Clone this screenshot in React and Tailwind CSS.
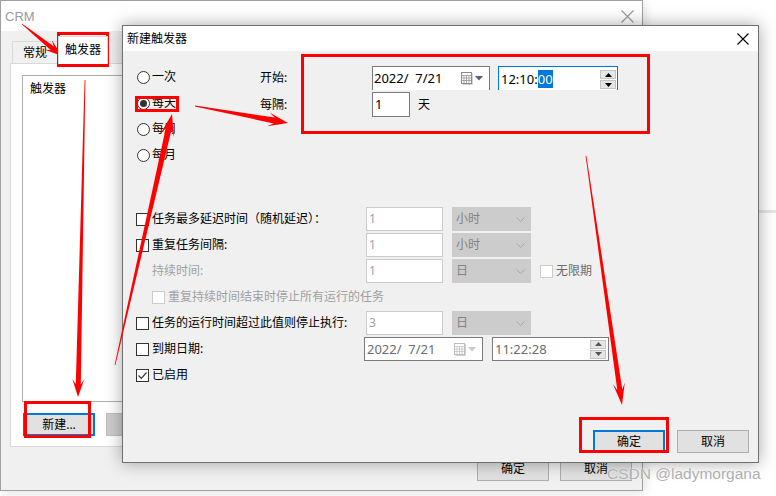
import React from "react";

function arrowPoints(x1, y1, x2, y2, head = 18, headW = 6, neckW = 2.5) {
  const dx = x2 - x1;
  const dy = y2 - y1;
  const len = Math.hypot(dx, dy);
  const ux = dx / len;
  const uy = dy / len;
  const nx = -uy;
  const ny = ux;
  const bx = x2 - ux * head;
  const by = y2 - uy * head;
  const kx = x2 - ux * head * 0.7;
  const ky = y2 - uy * head * 0.7;
  const pts = [
    [x1 + nx * 0.4, y1 + ny * 0.4],
    [kx + nx * neckW, ky + ny * neckW],
    [bx + nx * headW, by + ny * headW],
    [x2, y2],
    [bx - nx * headW, by - ny * headW],
    [kx - nx * neckW, ky - ny * neckW],
    [x1 - nx * 0.4, y1 - ny * 0.4],
  ];
  return pts.map((p) => p[0].toFixed(1) + "," + p[1].toFixed(1)).join(" ");
}

const arrows = [
  [22, 24, 62, 56, 18, 6, 2.5],
  [195, 106, 288, 123, 20, 7, 3],
  [115, 365, 172, 114, 22, 7, 3],
  [85, 80, 78, 397, 18, 6, 2.5],
  [586, 156, 622, 405, 22, 6, 2.5],
];

function CloseX({ color = "#000", size = 12 }) {
  return (
    <svg width={size} height={size} viewBox="0 0 12 12">
      <path d="M0.5 0.5 L11.5 11.5 M11.5 0.5 L0.5 11.5" stroke={color} strokeWidth="1.1" />
    </svg>
  );
}

function Radio({ checked }) {
  return (
    <span className="flex h-[13px] w-[13px] items-center justify-center rounded-full border border-[#333] bg-white">
      {checked && <span className="h-[7px] w-[7px] rounded-full bg-[#333]" />}
    </span>
  );
}

function Check({ checked, disabled }) {
  return (
    <span
      className={
        "flex h-[13px] w-[13px] items-center justify-center border bg-white " +
        (disabled ? "border-[#cccccc]" : "border-[#333]")
      }
    >
      {checked && (
        <svg width="11" height="11" viewBox="0 0 11 11">
          <path d="M1.5 5.5 L4.3 8.3 L9.5 2.5" fill="none" stroke="#333" strokeWidth="1.2" />
        </svg>
      )}
    </span>
  );
}

function Chevron() {
  return (
    <svg width="9" height="5" viewBox="0 0 9 5">
      <path d="M0.5 0.5 L4.5 4.5 L8.5 0.5" fill="none" stroke="#a8a8a8" strokeWidth="1" />
    </svg>
  );
}

function Calendar({ dim }) {
  const c = dim ? "#bdbdbd" : "#8a8a8a";
  return (
    <span className="flex items-center gap-[2px]">
      <svg width="12" height="13" viewBox="0 0 12 13">
        <rect x="0.5" y="0.5" width="10" height="11" fill="#fff" stroke={c} />
        <path d="M0.5 3.5 H10.5 M0.5 6 H10.5 M0.5 8.5 H10.5 M3 3.5 V11.5 M5.5 3.5 V11.5 M8 3.5 V11.5" stroke={c} strokeWidth="0.7" />
        <path d="M11.5 1.5 V12.5 H1.5" fill="none" stroke="#d0d0d0" />
      </svg>
      <svg width="8" height="5" viewBox="0 0 8 5">
        <path d="M0 0 H8 L4 4.5 Z" fill={dim ? "#c8c8c8" : "#4d5f7a"} />
      </svg>
    </span>
  );
}

function Spinner({ dim }) {
  const t = dim ? "#555" : "#000";
  return (
    <span className="flex flex-col gap-px">
      <span className="flex h-[9px] w-[16px] items-center justify-center border border-[#c4c4c4] bg-[#e6e6e6]">
        <svg width="7" height="4" viewBox="0 0 7 4"><path d="M0 4 H7 L3.5 0 Z" fill={t} /></svg>
      </span>
      <span className="flex h-[9px] w-[16px] items-center justify-center border border-[#c4c4c4] bg-[#e6e6e6]">
        <svg width="7" height="4" viewBox="0 0 7 4"><path d="M0 0 H7 L3.5 4 Z" fill={t} /></svg>
      </span>
    </span>
  );
}

function DisInput({ value }) {
  return (
    <div className="flex h-[24px] w-[77px] items-center border border-[#cccccc] bg-white pl-[2px] text-[#a0a0a0]">
      {value}
    </div>
  );
}

function Combo({ value }) {
  return (
    <div className="ml-[9px] flex h-[24px] w-[79px] items-center justify-between bg-[#cccccc] pl-[4px] pr-[6px] text-[#838383]">
      <span>{value}</span>
      <Chevron />
    </div>
  );
}

function Row({ children }) {
  return <div className="flex h-[24px] items-center">{children}</div>;
}

function WinButton({ children, focus, disabled, className = "" }) {
  return (
    <div
      className={
        "flex h-[23px] w-[72px] items-center justify-center " +
        (focus
          ? "border-2 border-[#0078d7] bg-[#e1e1e1] "
          : disabled
          ? "border border-[#bfbfbf] bg-[#cccccc] "
          : "border border-[#adadad] bg-[#e1e1e1] ") +
        className
      }
    >
      {children}
    </div>
  );
}

export default function App() {
  return (
    <div className="relative h-[496px] w-[776px] overflow-hidden bg-white font-['Noto_Sans','Noto_Sans_CJK_SC',sans-serif] text-[12px] leading-none text-black">
      {/* strip of the page behind */}
      <div className="absolute left-[643px] top-[210px] h-[3px] w-[133px] bg-[#e6e6e6]" />

      {/* CRM window */}
      <div className="absolute left-0 top-0 flex h-[491px] w-[643px] flex-col border border-[#a0a0a0] bg-[#f0f0f0] shadow-[2px_2px_10px_rgba(0,0,0,0.12)]">
        <div className="flex h-[30px] items-center justify-between bg-white pl-[4px] pr-[8px]">
          <span className="font-['Liberation_Sans',sans-serif] text-[13px] text-[#9a9a9a]">CRM</span>
          <CloseX color="#9a9a9a" size={13} />
        </div>
        <div className="flex flex-1 flex-col px-[9px] pt-[5px]">
          <div className="flex h-[27px] items-end pl-[2px]">
            <div className="flex h-[22px] w-[46px] items-center justify-center border border-b-0 border-[#d9d9d9] bg-[#f0f0f0]">
              常规
            </div>
            <div className="relative z-10 -mb-px flex h-[28px] w-[50px] items-center justify-center border border-b-0 border-[#d9d9d9] bg-white pb-[2px]">
              触发器
            </div>
          </div>
          <div className="flex h-[384px] flex-col border border-[#d9d9d9] bg-white px-[11px] pt-[11px]">
            <div className="h-[327px] border border-[#adadad] bg-white pl-[7px] pt-[7px]">触发器</div>
            <div className="mt-[11px] flex gap-[11px] pl-px">
              <WinButton focus>新建...</WinButton>
              <WinButton disabled />
            </div>
          </div>
          <div className="mt-[10px] flex justify-end gap-[11px] pr-px">
            <WinButton className="h-[24px]">确定</WinButton>
            <WinButton className="h-[24px]">取消</WinButton>
          </div>
        </div>
      </div>

      {/* 新建触发器 dialog */}
      <div className="absolute left-[122px] top-[25px] flex h-[438px] w-[637px] flex-col border border-[#707070] bg-[#f0f0f0] shadow-[0_0_16px_rgba(0,0,0,0.35)]">
        <div className="flex h-[25px] items-center justify-between bg-white pl-[4px] pr-[9px]">
          <span>新建触发器</span>
          <CloseX />
        </div>
        <div className="flex flex-1 flex-col">
          <div className="flex h-[156px]">
            <div className="flex w-[137px] flex-col pl-[14px] pt-[13px]">
              {["一次", "每天", "每周", "每月"].map((t, i) => (
                <div key={t} className="flex h-[26px] items-center gap-[2px]">
                  <Radio checked={i === 1} />
                  <span>{t}</span>
                </div>
              ))}
            </div>
            <div className="flex flex-col pt-[15px]">
              <div className="flex h-[24px] items-center">
                <span className="w-[112px]">开始:</span>
                <div className="flex h-[24px] w-[118px] items-center justify-between border border-b-0 border-[#7a7a7a] bg-white pl-[1px] pr-[6px] text-[13px]">
                  <span className="whitespace-pre">2022/  7/21</span>
                  <Calendar />
                </div>
                <div className="ml-[8px] flex h-[24px] w-[120px] items-center justify-between border border-b-0 border-[#0078d7] bg-white pl-[2px] pr-[1px] pt-[2px] text-[13px]">
                  <span>
                    12:10:<span className="bg-[#0078d7] text-white">00</span>
                  </span>
                  <Spinner />
                </div>
              </div>
              <div className="mt-[2px] flex h-[25px] items-center">
                <span className="w-[112px]">每隔:</span>
                <div className="flex h-[25px] w-[38px] items-center border border-[#7a7a7a] bg-white pl-[2px] text-[13px]">1</div>
                <span className="ml-[8px]">天</span>
              </div>
            </div>
          </div>

          <div className="flex flex-col gap-[2px] pl-[13px]">
            <Row>
              <span className="w-[16px]"><Check /></span>
              <span className="w-[214px]">任务最多延迟时间（随机延迟）：</span>
              <DisInput value="1" />
              <Combo value="小时" />
            </Row>
            <Row>
              <span className="w-[16px]"><Check /></span>
              <span className="w-[214px]">重复任务间隔:</span>
              <DisInput value="1" />
              <Combo value="小时" />
            </Row>
            <Row>
              <span className="w-[16px]" />
              <span className="w-[214px] text-[#a0a0a0]">持续时间:</span>
              <DisInput value="1" />
              <Combo value="日" />
              <span className="ml-[9px] flex items-center gap-[3px] text-[#6d6d6d]">
                <Check disabled />
                无限期
              </span>
            </Row>
            <Row>
              <span className="w-[16px]" />
              <span className="flex items-center gap-[3px] text-[#a0a0a0]">
                <Check disabled />
                重复持续时间结束时停止所有运行的任务
              </span>
            </Row>
            <Row>
              <span className="w-[16px]"><Check /></span>
              <span className="w-[214px]">任务的运行时间超过此值则停止执行:</span>
              <DisInput value="3" />
              <Combo value="日" />
            </Row>
            <Row>
              <span className="w-[16px]"><Check /></span>
              <span className="w-[212px]">到期日期:</span>
              <div className="flex h-[24px] w-[119px] items-center justify-between border border-[#7a7a7a] bg-white pl-[2px] pr-[6px] text-[13px] text-[#6d6d6d]">
                <span className="whitespace-pre">2022/  7/21</span>
                <Calendar dim />
              </div>
              <div className="ml-[9px] flex h-[24px] w-[117px] items-center justify-between border border-[#7a7a7a] bg-white pl-[2px] pr-[2px] text-[13px] text-[#6d6d6d]">
                <span>11:22:28</span>
                <Spinner dim />
              </div>
            </Row>
            <Row>
              <span className="w-[16px]"><Check checked /></span>
              <span>已启用</span>
            </Row>
          </div>

          <div className="flex-1" />
          <div className="flex justify-end gap-[12px] pb-[9px] pr-[9px]">
            <WinButton focus className="h-[22px]">确定</WinButton>
            <WinButton className="h-[22px]">取消</WinButton>
          </div>
        </div>
      </div>

      {/* annotations */}
      <div className="absolute left-[57px] top-[32px] h-[35px] w-[52px] border-[3px] border-[#ff0000]" />
      <div className="absolute left-[135px] top-[96px] h-[16px] w-[44px] border-[3px] border-[#ff0000]" />
      <div className="absolute left-[301px] top-[54px] h-[80px] w-[349px] border-[3px] border-[#ff0000]" />
      <div className="absolute left-[24px] top-[401px] h-[37px] w-[67px] border-[3px] border-[#ff0000]" />
      <div className="absolute left-[579px] top-[417px] h-[36px] w-[90px] border-[3px] border-[#ff0000]" />
      <svg className="pointer-events-none absolute left-0 top-0" width="776" height="496">
        {arrows.map((a, i) => (
          <polygon key={i} points={arrowPoints(...a)} fill="#ff0000" />
        ))}
      </svg>

      <div className="absolute left-[607px] top-[466px] font-['Liberation_Sans',sans-serif] text-[15.5px] text-[#b0b0b0] [text-shadow:0_0_2px_#fff]">
        CSDN @ladymorgana
      </div>
    </div>
  );
}
